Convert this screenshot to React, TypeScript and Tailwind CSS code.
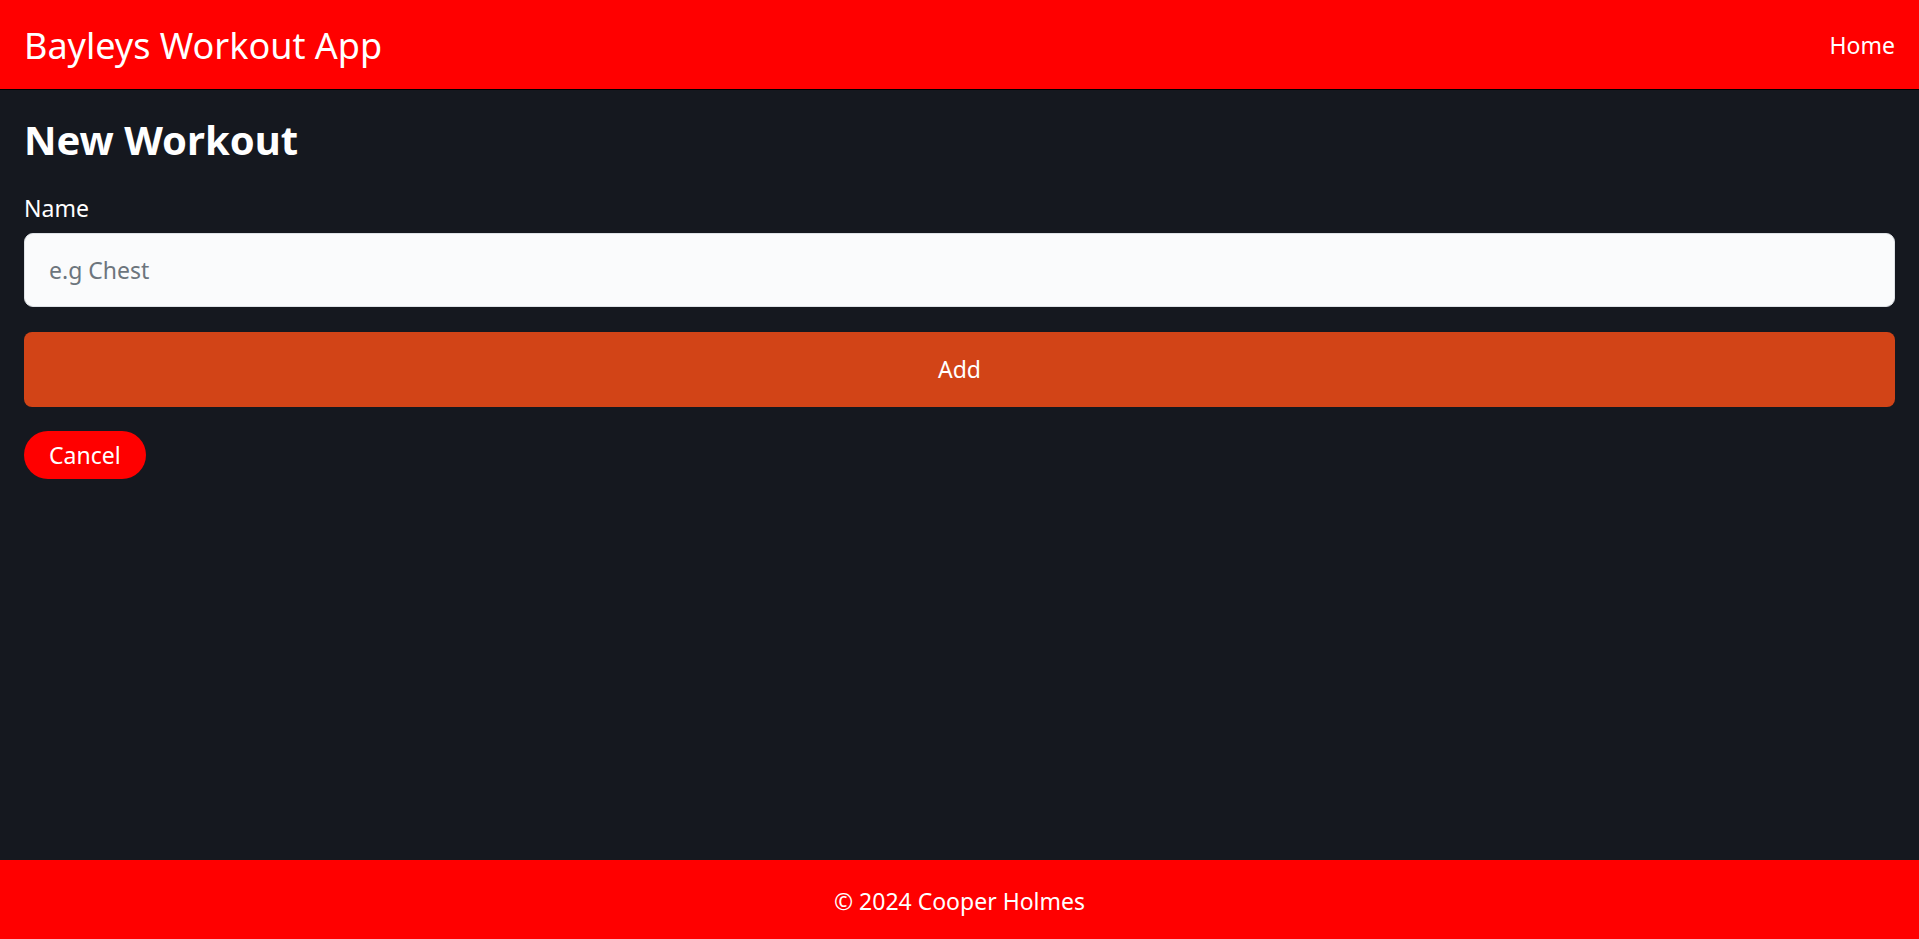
import { useState } from 'react'

export default function App() {
  const [name, setName] = useState('')

  return (
    <div className="h-screen flex flex-col bg-[#15181f] text-white font-['Noto_Sans',sans-serif]">
      <header className="h-[90px] shrink-0 flex items-center justify-between px-6 bg-[#ff0000] border-b border-black">
        <a href="#" className="pt-[2px] text-[36px] leading-none text-white">Bayleys Workout App</a>
        <a href="#" className="pt-[2px] text-[23px] leading-none text-white">Home</a>
      </header>

      <main className="flex-1 px-6">
        <h1 className="mt-[26px] text-[40px] leading-[48px] font-bold">New Workout</h1>

        <form onSubmit={(e) => e.preventDefault()} className="mt-[26px]">
          <label htmlFor="name" className="block text-[23px] leading-[36px]">Name</label>
          <input
            id="name"
            type="text"
            value={name}
            onChange={(e) => setName(e.target.value)}
            placeholder="e.g Chest"
            className="mt-[7px] block w-full h-[74px] px-6 text-[23px] text-[#212529] bg-[#fafbfc] border border-[#dee2e6] rounded-[9px] outline-none placeholder:text-[#6c757d]"
          />
          <button
            type="submit"
            className="mt-[25px] block w-full h-[75px] text-[23px] text-white bg-[#d24417] rounded-[8px]"
          >
            Add
          </button>
        </form>

        <button className="mt-[24px] h-[48px] px-[25px] text-[23px] leading-none text-white bg-[#ff0000] rounded-full">
          Cancel
        </button>
      </main>

      <footer className="h-[79px] shrink-0 flex items-center justify-center bg-[#ff0000]">
        <p className="pt-[4px] text-[23px] text-white">&copy; 2024 Cooper Holmes</p>
      </footer>
    </div>
  )
}
